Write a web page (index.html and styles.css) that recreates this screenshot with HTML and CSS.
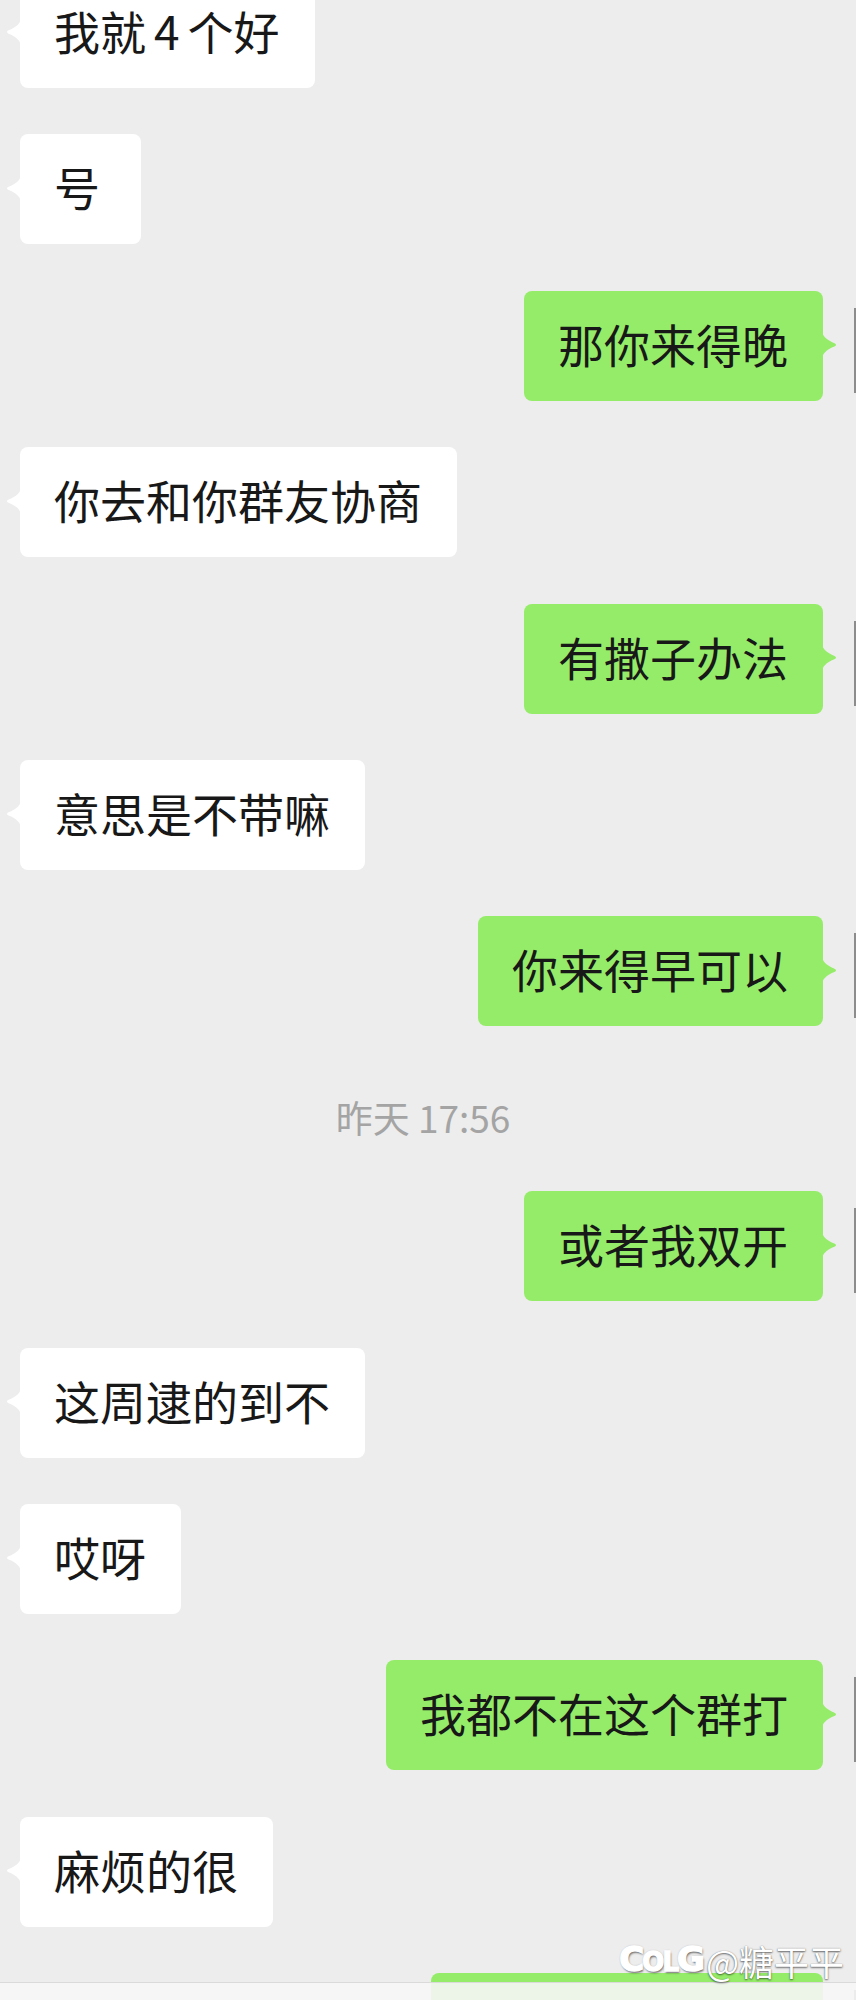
FILE: index.html
```html
<!DOCTYPE html>
<html lang="zh-CN">
<head>
    <meta charset="UTF-8">
    <meta name="viewport" content="width=device-width, initial-scale=1.0">
    <title>聊天</title>
    <link rel="stylesheet" href="styles.css">
</head>
<body>
    <div class="screen">
        <div class="chat">
            <div class="row left"><div class="bubble">我就<span class="num">4</span>个好</div></div>
            <div class="row left"><div class="bubble">号</div></div>
            <div class="row right"><div class="bubble">那你来得晚</div></div>
            <div class="row left"><div class="bubble">你去和你群友协商</div></div>
            <div class="row right"><div class="bubble">有撒子办法</div></div>
            <div class="row left"><div class="bubble">意思是不带嘛</div></div>
            <div class="row right"><div class="bubble">你来得早可以</div></div>

            <div class="time">昨天 17:56</div>

            <div class="row right"><div class="bubble">或者我双开</div></div>
            <div class="row left"><div class="bubble">这周逮的到不</div></div>
            <div class="row left"><div class="bubble">哎呀</div></div>
            <div class="row right"><div class="bubble">我都不在这个群打</div></div>
            <div class="row left"><div class="bubble">麻烦的很</div></div>
            <!-- only the top edge of this one is on screen -->
            <div class="row right"><div class="bubble cut"></div></div>
        </div>

        <!-- translucent input bar peeking at the bottom -->
        <div class="input-bar"></div>

        <div class="watermark">
            <span class="logo">C<span class="small">O</span><span class="small">L</span>G</span>@糖平平
        </div>
    </div>
</body>
</html>
```

FILE: styles.css
```css
body {
    margin: 0;
    background-color: #ededed;
    font-family: "Noto Sans CJK SC", "Noto Sans", sans-serif;
}
.screen {
    position: relative;
    width: 856px;
    height: 2000px;
    overflow: hidden;
}
.chat {
    display: flex;
    flex-direction: column;
    gap: 46.4px;
    margin-top: -22px;
}
.row {
    position: relative;
    display: flex;
}
.row.left {
    padding-left: 20px;
}
.row.right {
    justify-content: flex-end;
    padding-right: 33px;
}
/* edge of the avatar, cut off by the screenshot */
.row.right::after {
    content: "";
    position: absolute;
    right: 0;
    top: 17px;
    width: 2px;
    height: 85px;
    background-color: #8c8c8c;
}
.bubble {
    position: relative;
    box-sizing: border-box;
    min-width: 121px;
    height: 110px;
    padding: 0 35px 5px 34px;
    font-size: 46px;
    line-height: 105px;
    color: #181818;
    white-space: nowrap;
    border-radius: 8px;
}
.bubble.cut {
    width: 392px;
}
.left .bubble {
    background-color: #fff;
}
.right .bubble {
    background-color: #95ec69;
}
.bubble::before {
    content: "";
    position: absolute;
    top: 39px;
    width: 15px;
    height: 30px;
}
.left .bubble::before {
    left: -14px;
    background-color: #fff;
    clip-path: path("M15 0 C15 6 11 10 2 13.6 Q0 15 2 16.4 C11 20 15 24 15 30 Z");
}
.right .bubble::before {
    right: -14px;
    background-color: #95ec69;
    clip-path: path("M0 0 C0 6 4 10 13 13.6 Q15 15 13 16.4 C4 20 0 24 0 30 Z");
}
.num {
    margin: 0 8px;
}
.time {
    padding: 26px 10px 10px 0;
    font-size: 37px;
    line-height: 36px;
    text-align: center;
    color: #a4a4a4;
}
.time-num {
    letter-spacing: 1px;
}
.input-bar {
    position: absolute;
    left: 0;
    right: 0;
    bottom: 0;
    height: 17px;
    border-top: 1px solid #dadada;
    background-color: rgba(246, 246, 246, 0.9);
}
.watermark {
    position: absolute;
    right: 12px;
    bottom: 20px;
    display: flex;
    align-items: center;
    font-size: 35px;
    line-height: 36px;
    color: #fff;
    text-shadow: 0 1px 2px rgba(0, 0, 0, 0.55), 0 0 1px rgba(0, 0, 0, 0.4);
}
.logo {
    margin-right: 3px;
    font-family: "DejaVu Sans", sans-serif;
    font-weight: bold;
    font-size: 34px;
    letter-spacing: -2px;
    -webkit-text-stroke: 1.5px #fff;
    text-shadow: 1px 2px 2px rgba(0, 0, 0, 0.5), 0 0 2px rgba(0, 0, 0, 0.45);
}
.logo .small {
    font-size: 26px;
}
```
